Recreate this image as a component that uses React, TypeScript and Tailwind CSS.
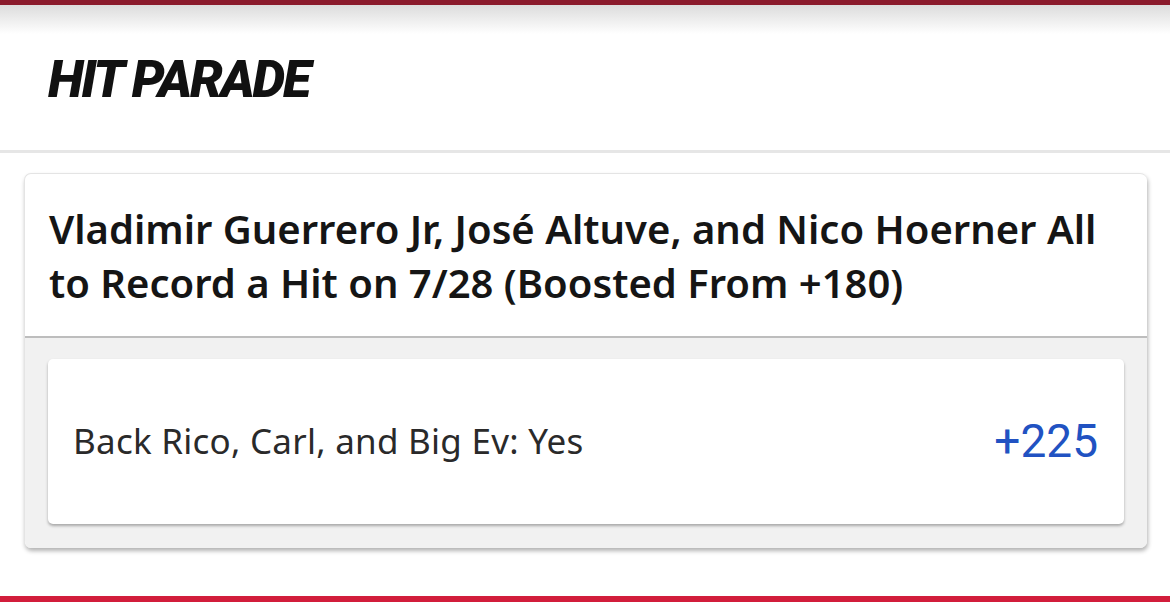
import React from "react";

export default function App() {
  return (
    <div className="w-[1170px] h-[613px] bg-white overflow-hidden flex flex-col">
      <div className="h-[5px] bg-[#8a1a2c] shrink-0" />
      <div className="h-[145px] shrink-0 bg-gradient-to-b from-[#dcdcdc] via-white via-[20%] to-white flex items-center pl-[48px] pt-[4px]">
        <h1 className="text-[52px] leading-none font-black italic text-[#111] tracking-[-2.3px] [font-family:Roboto,sans-serif]">
          HIT PARADE
        </h1>
      </div>
      <div className="h-[3px] bg-[#e6e6e6] shrink-0" />
      <div className="pt-[20px] px-[24px] pr-[23px]">
        <div className="rounded-[7px] bg-white shadow-[1px_3px_4px_rgba(0,0,0,0.3)] border-l border-t border-[#e4e4e4] overflow-hidden">
          <div className="h-[162px] px-[24px] pt-[28px] text-[40px] leading-[54px] font-semibold text-[#151515] [font-family:'Noto_Sans',sans-serif]">
            Vladimir Guerrero Jr, José Altuve, and Nico Hoerner All to Record a Hit on 7/28 (Boosted From +180)
          </div>
          <div className="h-[2px] bg-[#bdbdbd]" />
          <div className="bg-[#f1f1f1] px-[23px] pt-[21px] pb-[24px]">
            <div className="h-[165px] rounded-[5px] bg-white shadow-[0_2px_3px_rgba(0,0,0,0.3)] flex items-center justify-between pl-[25px] pr-[26px]">
              <span className="text-[35px] text-[#2a2a2a] tracking-[0.25px] [font-family:'Noto_Sans',sans-serif]">
                Back Rico, Carl, and Big Ev: Yes
              </span>
              <span className="text-[46px] text-[#2152c2] [font-family:Roboto,sans-serif]">+225</span>
            </div>
          </div>
        </div>
      </div>
      <div className="flex-1" />
      <div className="h-[6px] bg-[#d21d3b] shrink-0 mb-[11px]" />
    </div>
  );
}
